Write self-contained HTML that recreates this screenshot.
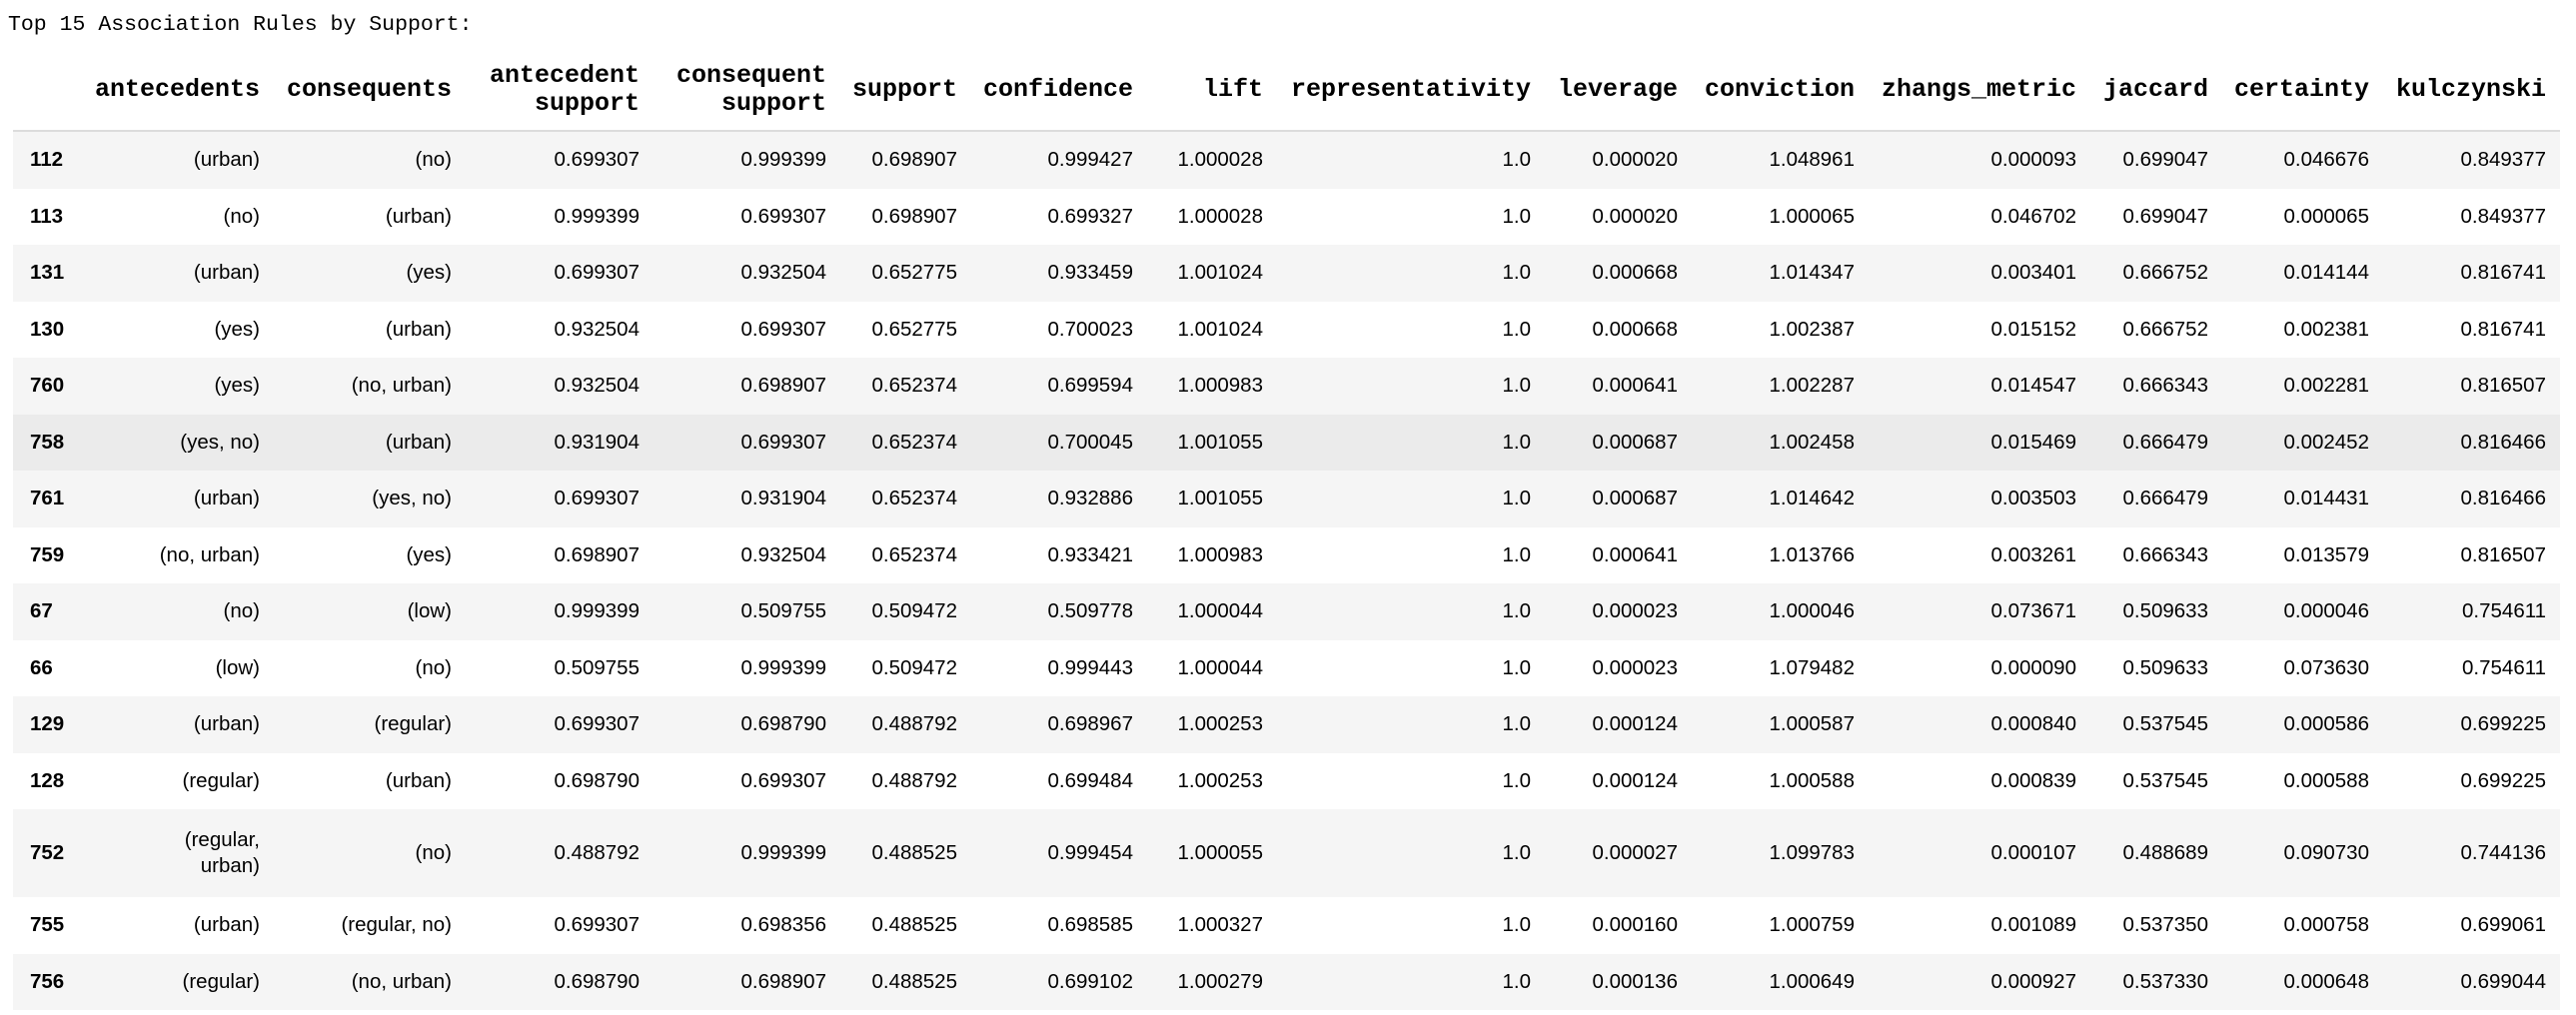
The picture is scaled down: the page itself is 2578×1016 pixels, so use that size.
<!DOCTYPE html>
<html><head><meta charset="utf-8"><style>
body{margin:0;background:#fff;width:2578px;height:1016px;overflow:hidden;}
.title{position:absolute;left:8px;top:13px;font-family:"Liberation Mono",monospace;font-size:21.5px;color:#000;white-space:pre;}
table{position:absolute;left:13px;top:49px;border-collapse:collapse;table-layout:fixed;width:2549px;font-family:"Liberation Sans",sans-serif;font-size:20.5px;color:#000;}
th{font-family:"Liberation Mono",monospace;font-weight:bold;font-size:25px;text-align:right;vertical-align:middle;padding:0 14px 0 0;line-height:28px;height:81px;border-bottom:2px solid #dcdcdc;white-space:nowrap;}
td{text-align:right;padding:0 14px 0 0;height:56.5px;line-height:26px;white-space:nowrap;}
td.i{text-align:left;font-weight:bold;padding-left:17px;}
tbody tr:nth-child(odd){background:#f5f5f5;}
tbody tr.h{background:#ebebeb;}
tr.t td{height:88px;}
</style></head><body>
<div class="title">Top 15 Association Rules by Support:</div>
<table>
<colgroup><col style="width:77px"><col style="width:184px"><col style="width:192px"><col style="width:188px"><col style="width:187px"><col style="width:131px"><col style="width:176px"><col style="width:130px"><col style="width:268px"><col style="width:147px"><col style="width:177px"><col style="width:222px"><col style="width:132px"><col style="width:161px"><col style="width:177px"></colgroup>
<thead><tr><th></th><th>antecedents</th><th>consequents</th><th>antecedent<br>support</th><th>consequent<br>support</th><th>support</th><th>confidence</th><th>lift</th><th>representativity</th><th>leverage</th><th>conviction</th><th>zhangs_metric</th><th>jaccard</th><th>certainty</th><th>kulczynski</th></tr></thead>
<tbody>
<tr><td class="i">112</td><td>(urban)</td><td>(no)</td><td>0.699307</td><td>0.999399</td><td>0.698907</td><td>0.999427</td><td>1.000028</td><td>1.0</td><td>0.000020</td><td>1.048961</td><td>0.000093</td><td>0.699047</td><td>0.046676</td><td>0.849377</td></tr>
<tr><td class="i">113</td><td>(no)</td><td>(urban)</td><td>0.999399</td><td>0.699307</td><td>0.698907</td><td>0.699327</td><td>1.000028</td><td>1.0</td><td>0.000020</td><td>1.000065</td><td>0.046702</td><td>0.699047</td><td>0.000065</td><td>0.849377</td></tr>
<tr><td class="i">131</td><td>(urban)</td><td>(yes)</td><td>0.699307</td><td>0.932504</td><td>0.652775</td><td>0.933459</td><td>1.001024</td><td>1.0</td><td>0.000668</td><td>1.014347</td><td>0.003401</td><td>0.666752</td><td>0.014144</td><td>0.816741</td></tr>
<tr><td class="i">130</td><td>(yes)</td><td>(urban)</td><td>0.932504</td><td>0.699307</td><td>0.652775</td><td>0.700023</td><td>1.001024</td><td>1.0</td><td>0.000668</td><td>1.002387</td><td>0.015152</td><td>0.666752</td><td>0.002381</td><td>0.816741</td></tr>
<tr><td class="i">760</td><td>(yes)</td><td>(no, urban)</td><td>0.932504</td><td>0.698907</td><td>0.652374</td><td>0.699594</td><td>1.000983</td><td>1.0</td><td>0.000641</td><td>1.002287</td><td>0.014547</td><td>0.666343</td><td>0.002281</td><td>0.816507</td></tr>
<tr class="h"><td class="i">758</td><td>(yes, no)</td><td>(urban)</td><td>0.931904</td><td>0.699307</td><td>0.652374</td><td>0.700045</td><td>1.001055</td><td>1.0</td><td>0.000687</td><td>1.002458</td><td>0.015469</td><td>0.666479</td><td>0.002452</td><td>0.816466</td></tr>
<tr><td class="i">761</td><td>(urban)</td><td>(yes, no)</td><td>0.699307</td><td>0.931904</td><td>0.652374</td><td>0.932886</td><td>1.001055</td><td>1.0</td><td>0.000687</td><td>1.014642</td><td>0.003503</td><td>0.666479</td><td>0.014431</td><td>0.816466</td></tr>
<tr><td class="i">759</td><td>(no, urban)</td><td>(yes)</td><td>0.698907</td><td>0.932504</td><td>0.652374</td><td>0.933421</td><td>1.000983</td><td>1.0</td><td>0.000641</td><td>1.013766</td><td>0.003261</td><td>0.666343</td><td>0.013579</td><td>0.816507</td></tr>
<tr><td class="i">67</td><td>(no)</td><td>(low)</td><td>0.999399</td><td>0.509755</td><td>0.509472</td><td>0.509778</td><td>1.000044</td><td>1.0</td><td>0.000023</td><td>1.000046</td><td>0.073671</td><td>0.509633</td><td>0.000046</td><td>0.754611</td></tr>
<tr><td class="i">66</td><td>(low)</td><td>(no)</td><td>0.509755</td><td>0.999399</td><td>0.509472</td><td>0.999443</td><td>1.000044</td><td>1.0</td><td>0.000023</td><td>1.079482</td><td>0.000090</td><td>0.509633</td><td>0.073630</td><td>0.754611</td></tr>
<tr><td class="i">129</td><td>(urban)</td><td>(regular)</td><td>0.699307</td><td>0.698790</td><td>0.488792</td><td>0.698967</td><td>1.000253</td><td>1.0</td><td>0.000124</td><td>1.000587</td><td>0.000840</td><td>0.537545</td><td>0.000586</td><td>0.699225</td></tr>
<tr><td class="i">128</td><td>(regular)</td><td>(urban)</td><td>0.698790</td><td>0.699307</td><td>0.488792</td><td>0.699484</td><td>1.000253</td><td>1.0</td><td>0.000124</td><td>1.000588</td><td>0.000839</td><td>0.537545</td><td>0.000588</td><td>0.699225</td></tr>
<tr class="t"><td class="i">752</td><td>(regular,<br>urban)</td><td>(no)</td><td>0.488792</td><td>0.999399</td><td>0.488525</td><td>0.999454</td><td>1.000055</td><td>1.0</td><td>0.000027</td><td>1.099783</td><td>0.000107</td><td>0.488689</td><td>0.090730</td><td>0.744136</td></tr>
<tr><td class="i">755</td><td>(urban)</td><td>(regular, no)</td><td>0.699307</td><td>0.698356</td><td>0.488525</td><td>0.698585</td><td>1.000327</td><td>1.0</td><td>0.000160</td><td>1.000759</td><td>0.001089</td><td>0.537350</td><td>0.000758</td><td>0.699061</td></tr>
<tr><td class="i">756</td><td>(regular)</td><td>(no, urban)</td><td>0.698790</td><td>0.698907</td><td>0.488525</td><td>0.699102</td><td>1.000279</td><td>1.0</td><td>0.000136</td><td>1.000649</td><td>0.000927</td><td>0.537330</td><td>0.000648</td><td>0.699044</td></tr>
</tbody></table>
</body></html>
